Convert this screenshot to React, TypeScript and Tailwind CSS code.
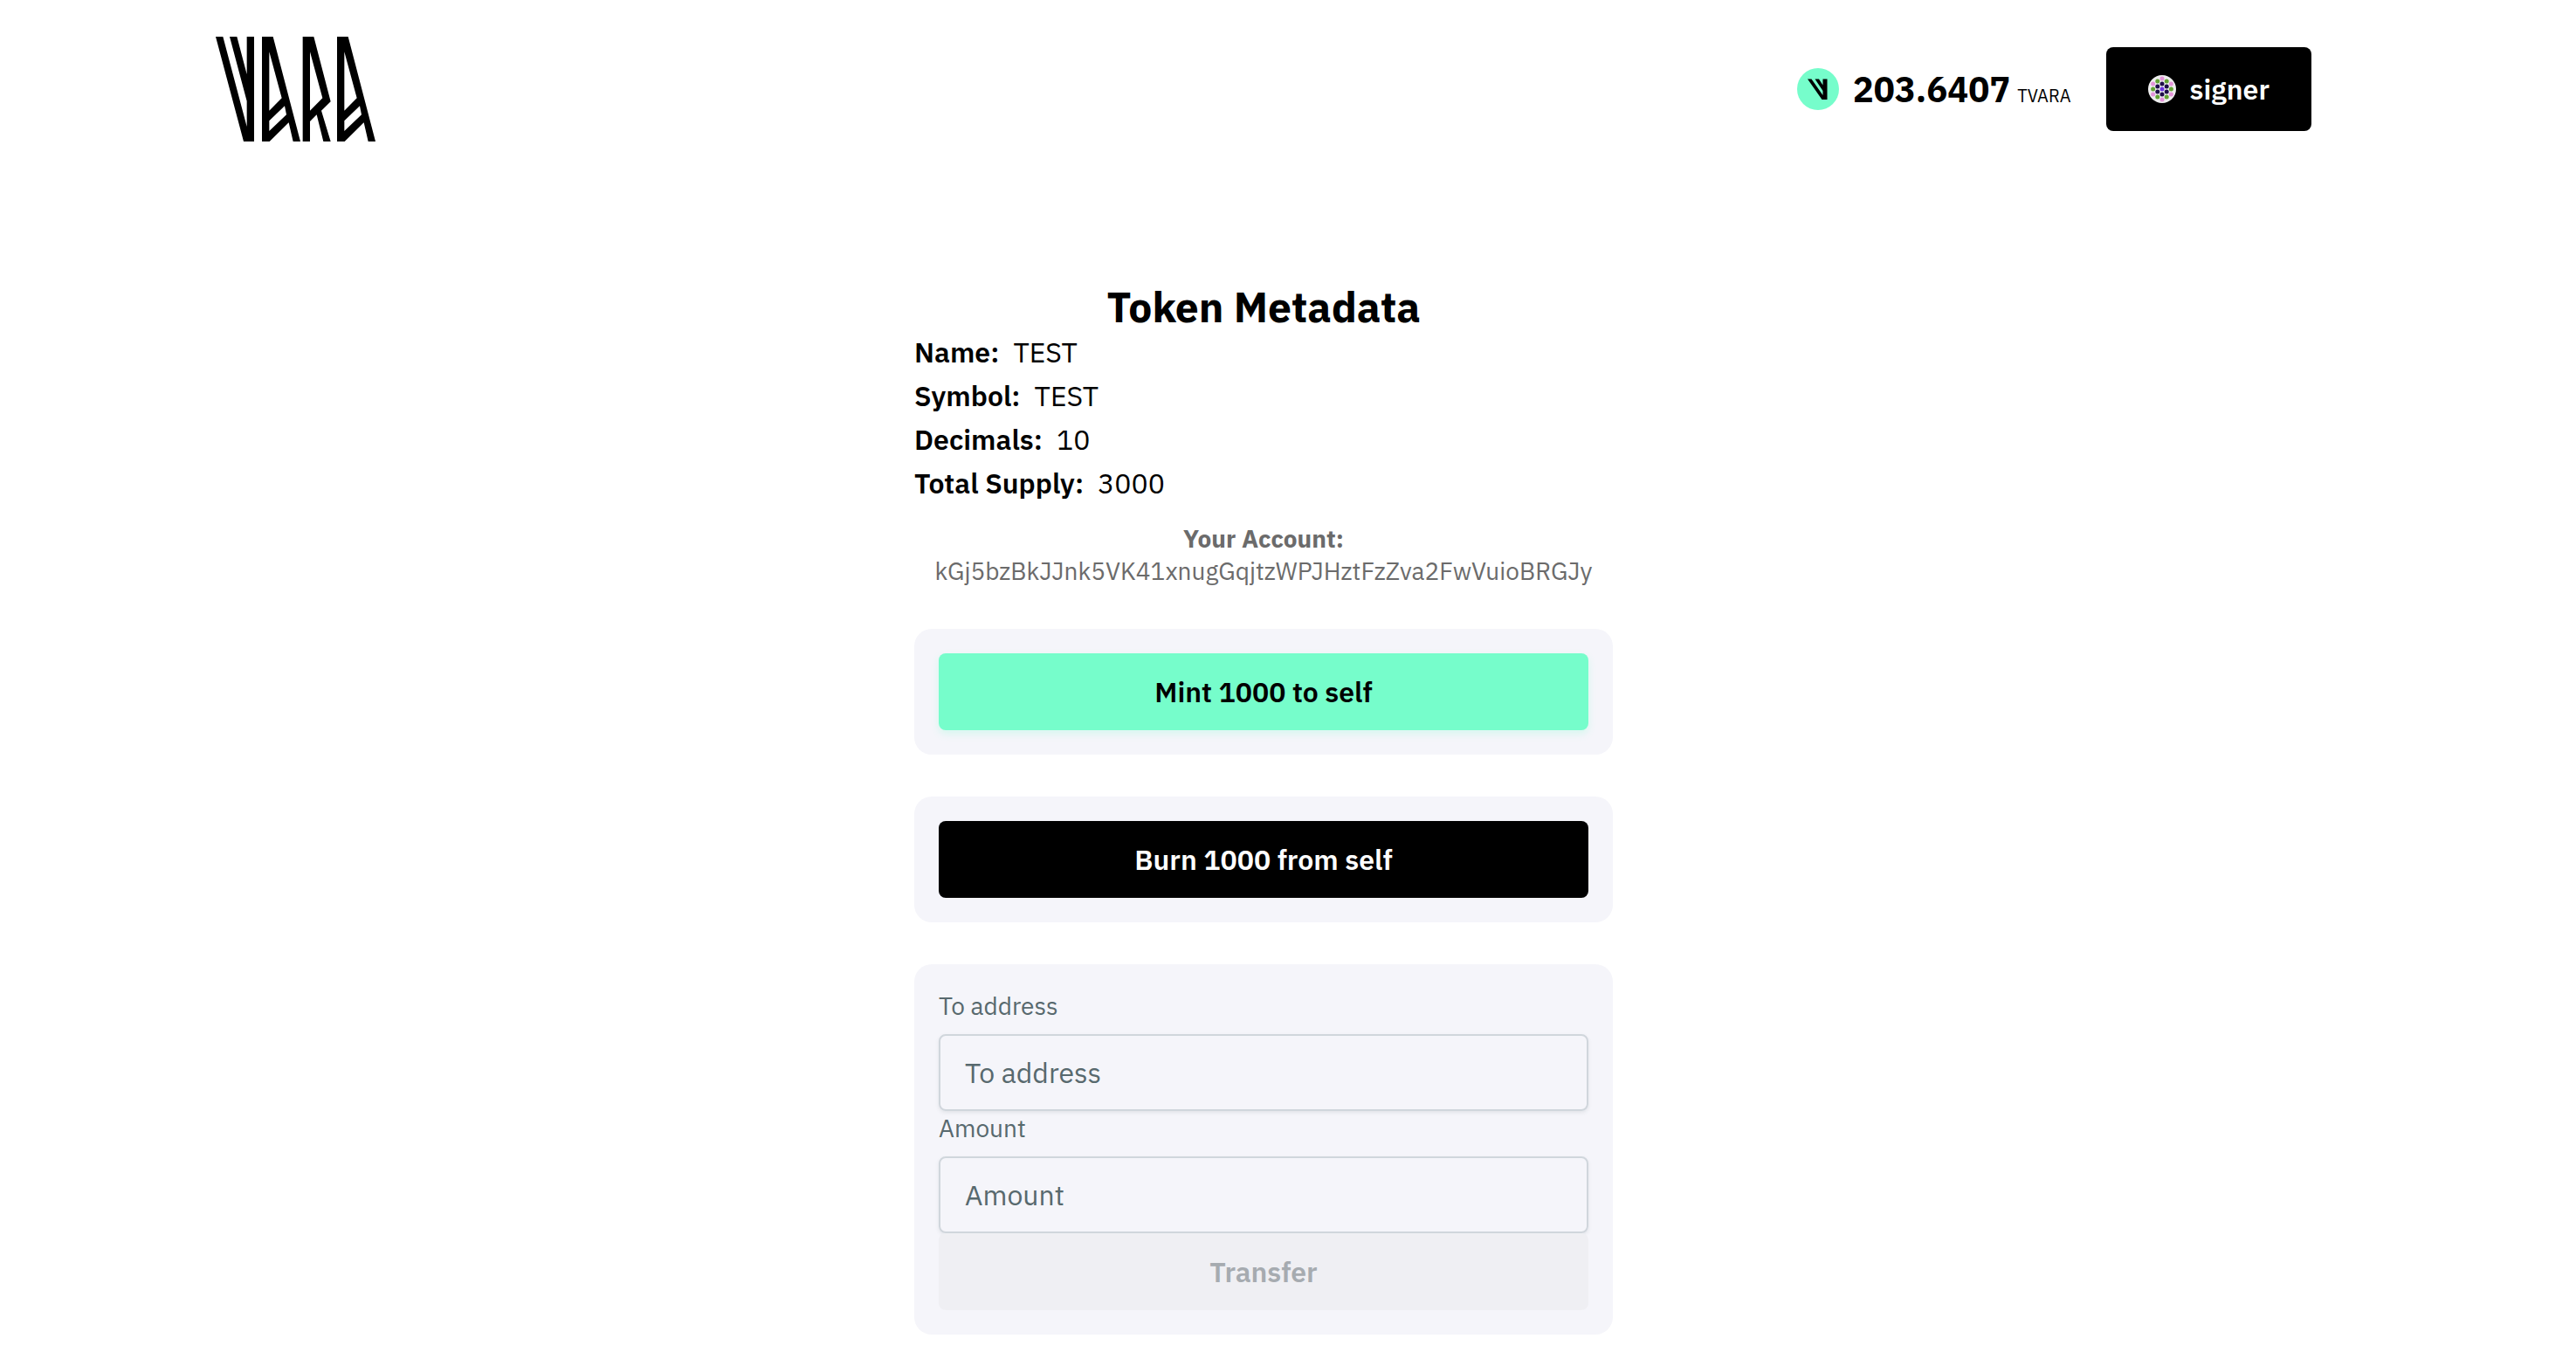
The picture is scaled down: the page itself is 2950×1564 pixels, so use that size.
const metadata = [
  { label: "Name:", value: "TEST" },
  { label: "Symbol:", value: "TEST" },
  { label: "Decimals:", value: "10" },
  { label: "Total Supply:", value: "3000" },
];

const PINK = "#e495d9";
const GREEN = "#64a434";
const NAVY = "#1e0e49";
const PURPLE = "#6c33e0";

const identiconDots: [number, number, string][] = [
  [32, 8, PINK],
  [11.2, 20, PINK],
  [52.8, 20, PINK],
  [11.2, 44, PINK],
  [52.8, 44, PINK],
  [32, 56, PINK],
  [21.6, 14, GREEN],
  [42.4, 14, GREEN],
  [11.2, 32, GREEN],
  [52.8, 32, GREEN],
  [21.6, 50, GREEN],
  [42.4, 50, GREEN],
  [32, 20, NAVY],
  [21.6, 26, NAVY],
  [42.4, 26, NAVY],
  [21.6, 38, NAVY],
  [42.4, 38, NAVY],
  [32, 44, NAVY],
  [32, 32, PURPLE],
];

function Logo() {
  return (
    <svg viewBox="0 0 549 360" className="h-[120px] w-[183px]" role="img" aria-label="Vara">
      <g transform="translate(-51 -36)" fillRule="evenodd">
        <path d="M51 36H76L158 345V257L99 36H124L158 165V36H183V396H147Z" />
        <path d="M210 36H248L342 396H317L302 331L236 396H210ZM235 88V290L278 247ZM235 325V360L294 304L288 274Z" />
        <path d="M350 36H388L446 259L414 290L446 396H421L398 304L375 327V396H350ZM375 88V290L418 247Z" />
        <path d="M468 36H506L600 396H575L560 331L494 396H468ZM493 88V290L536 247ZM493 325V360L552 304L546 274Z" />
      </g>
    </svg>
  );
}

function CoinIcon() {
  return (
    <svg viewBox="0 0 48 48" className="size-12" aria-hidden="true">
      <circle cx="24" cy="24" r="24" fill="#76fdcb" />
      <path d="M12 12.5H16.5L29.5 31V26L20.5 12.5H25L29.5 19.5V12.5H34.5V36H28.5Z" />
    </svg>
  );
}

function Identicon() {
  return (
    <svg viewBox="0 0 64 64" className="size-8" aria-hidden="true">
      <circle cx="32" cy="32" r="32" fill="#eeeeee" />
      {identiconDots.map(([cx, cy, fill]) => (
        <circle key={`${cx}-${cy}`} cx={cx} cy={cy} r="5" fill={fill} />
      ))}
    </svg>
  );
}

function Field({ id, label }: { id: string; label: string }) {
  return (
    <div className="flex flex-col gap-3">
      <label htmlFor={id} className="text-[28px] leading-10 text-[#58696e]">
        {label}
      </label>
      <input
        id={id}
        type="text"
        placeholder={label}
        className="h-[88px] w-full rounded-lg border-2 border-[#d0d6dc] bg-transparent px-7 text-[32px] text-black shadow-[0_2px_4px_rgba(88,105,110,0.12)] placeholder:text-[#58696e] placeholder:opacity-100"
      />
    </div>
  );
}

export default function App() {
  return (
    <div className="min-h-screen bg-white pr-14 font-['IBM_Plex_Sans','Roboto',sans-serif] text-black">
      <header className="mx-auto flex w-full max-w-[2400px] items-center justify-between py-[42px]">
        <a href="#home">
          <Logo />
        </a>
        <div className="flex items-center gap-10">
          <div className="flex items-center gap-4">
            <CoinIcon />
            <p className="flex items-baseline gap-2">
              <span className="text-[40px] leading-none font-bold">203.6407</span>
              <span className="text-xl leading-none">TVARA</span>
            </p>
          </div>
          <button
            type="button"
            className="flex h-24 items-center gap-4 rounded-lg bg-black px-12 text-[32px] font-semibold text-white"
          >
            <Identicon />
            signer
          </button>
        </div>
      </header>

      <main className="mx-auto flex w-full max-w-[800px] flex-col pt-[120px] pb-9">
        <h1 className="text-center text-5xl leading-[54px] font-bold">Token Metadata</h1>
        <dl className="text-[32px] leading-[50px]">
          {metadata.map(({ label, value }) => (
            <div key={label} className="flex gap-4">
              <dt className="font-semibold">{label}</dt>
              <dd>{value}</dd>
            </div>
          ))}
        </dl>
        <p className="mt-5 text-center text-[28px] leading-[37px] text-[#6b6b6b]">
          <strong className="block font-bold">Your Account:</strong>
          kGj5bzBkJJnk5VK41xnugGqjtzWPJHztFzZva2FwVuioBRGJy
        </p>

        <div className="mt-12 flex flex-col gap-12">
          <section className="rounded-[20px] bg-[#f5f5fa] p-7">
            <button
              type="button"
              className="h-[88px] w-full rounded-lg bg-[#76fdcb] text-[32px] font-semibold shadow-[0_4px_8px_rgba(118,253,203,0.24)]"
            >
              Mint 1000 to self
            </button>
          </section>
          <section className="rounded-[20px] bg-[#f5f5fa] p-7">
            <button
              type="button"
              className="h-[88px] w-full rounded-lg bg-black text-[32px] font-semibold text-white"
            >
              Burn 1000 from self
            </button>
          </section>
          <form className="flex flex-col rounded-[20px] bg-[#f5f5fa] p-7">
            <Field id="to-address" label="To address" />
            <Field id="amount" label="Amount" />
            <button
              type="submit"
              disabled
              className="h-[88px] w-full rounded-lg bg-[#efeff3] text-[32px] font-semibold text-[#a6abb0]"
            >
              Transfer
            </button>
          </form>
        </div>
      </main>
    </div>
  );
}
